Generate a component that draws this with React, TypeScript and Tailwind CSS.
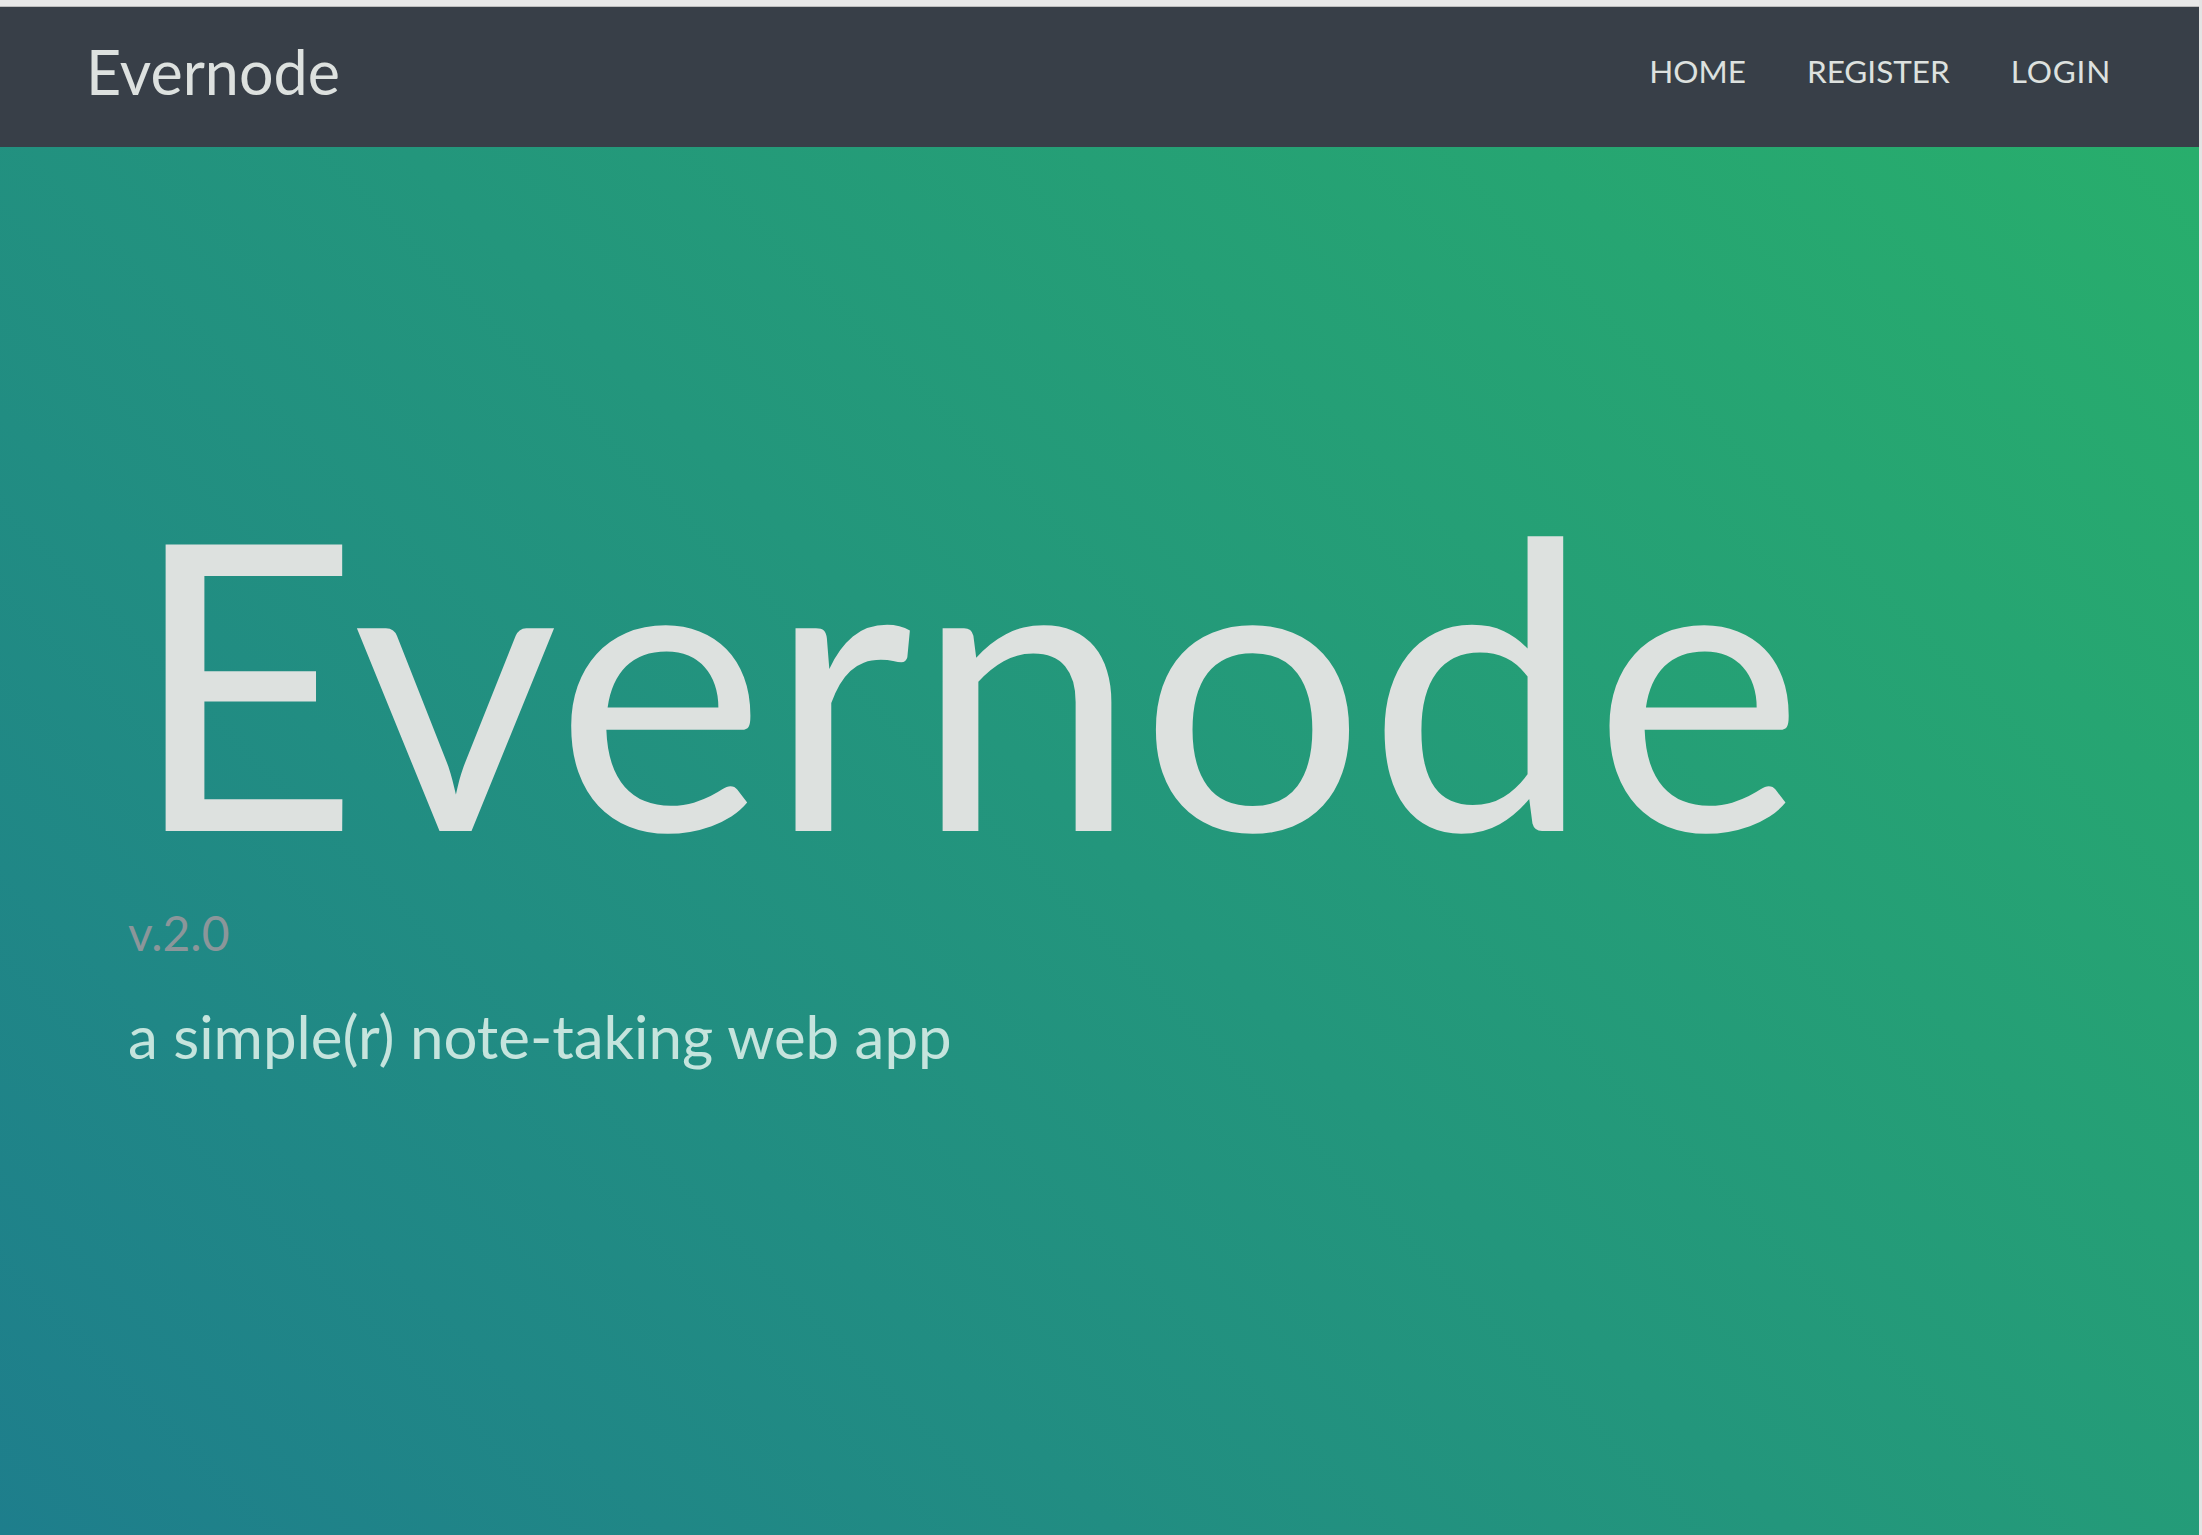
import React from "react";

export default function App() {
  return (
    <div className="flex h-[1535px] w-full overflow-hidden font-['Lato',sans-serif]">
      <div className="flex min-w-0 flex-1 flex-col">
        <div className="h-[7px] border-b border-[#bdbdbd] bg-[#e8e8e8]" />
        <nav className="flex h-[140px] items-center justify-between bg-[#383f48] pb-[10px] pl-[86px] pr-[88px] text-[#dde1df]">
          <a className="text-[61px] leading-[1.2]">Evernode</a>
          <ul className="flex items-center gap-[61px] text-[31.5px] leading-[1.2] uppercase">
            <li>Home</li>
            <li>Register</li>
            <li className="tracking-[0.8px]">Login</li>
          </ul>
        </nav>
        <main className="flex flex-1 flex-col bg-[linear-gradient(45deg,#1e7e8c,#28ae6c)] pl-[128px] pt-[329px]">
          <h1 className="pl-[1px] text-[400px] font-normal leading-none tracking-[1.5px] text-[#dde1df]">Evernode</h1>
          <p className="mt-[33px] text-[48px] leading-none text-[#8b969a]">v.2.0</p>
          <p className="mt-[49px] text-[60px] leading-none text-[#c5e4dd]">a simple(r) note-taking web app</p>
        </main>
      </div>
      <div className="w-[3px] bg-[#e4e4e4]" />
    </div>
  );
}
